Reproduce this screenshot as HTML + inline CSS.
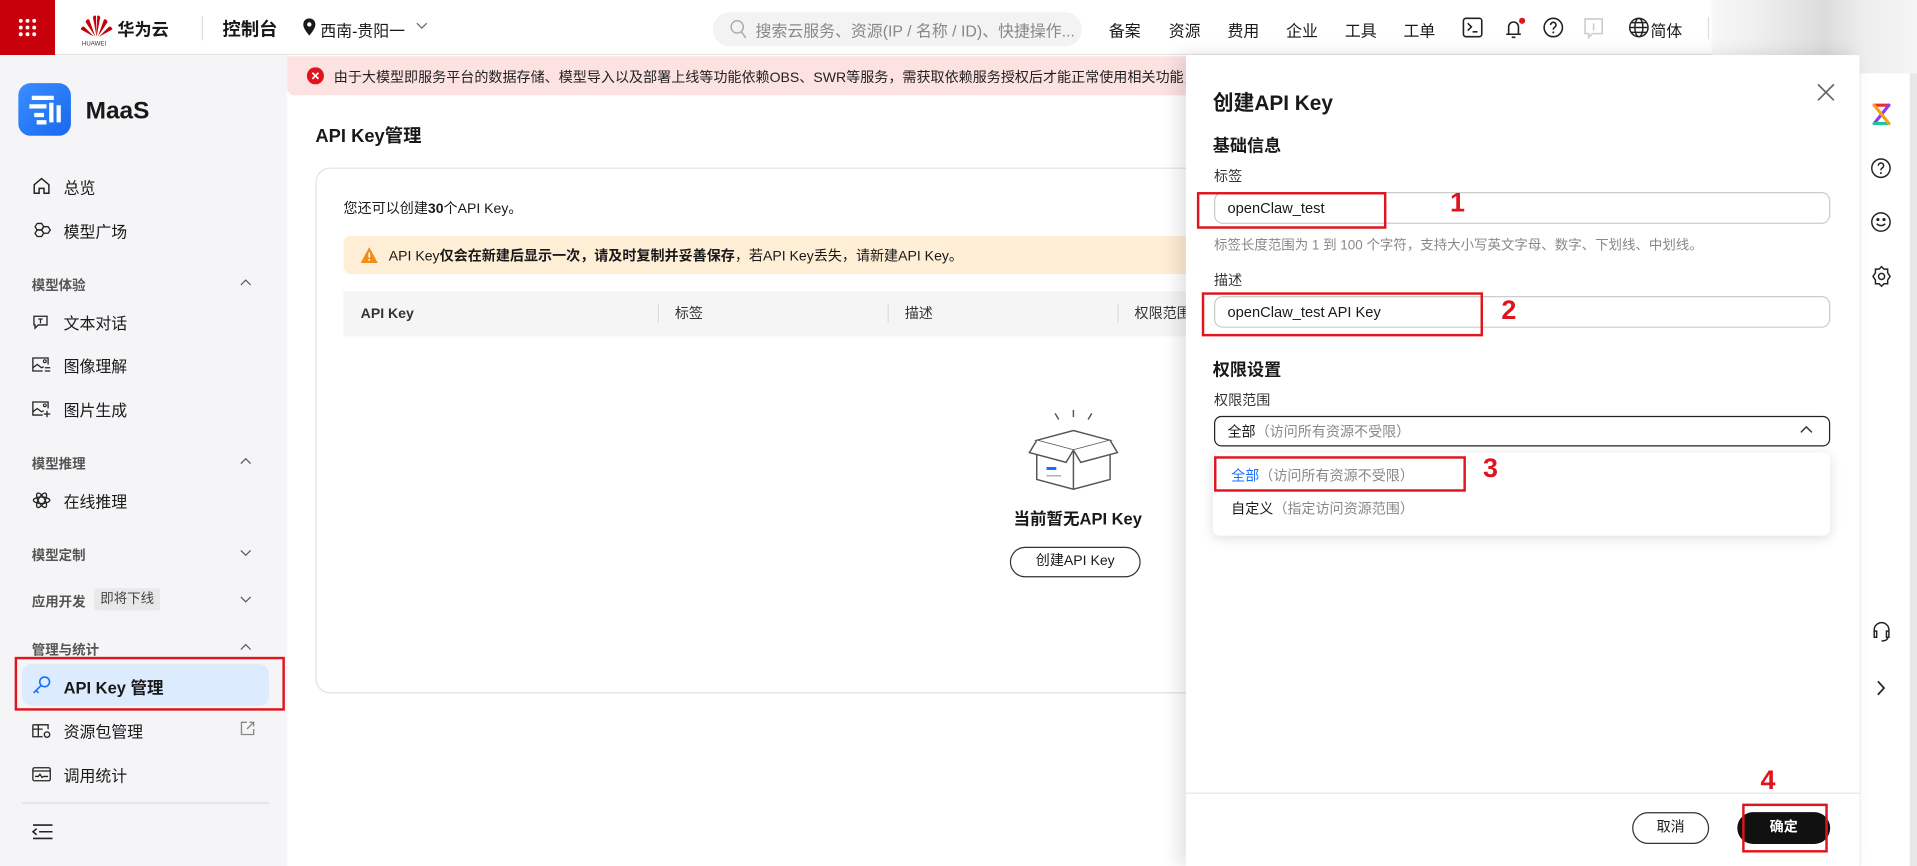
<!DOCTYPE html>
<html><head><meta charset="utf-8">
<style>
*{box-sizing:border-box;margin:0;padding:0}
html,body{width:1917px;height:866px;overflow:hidden;background:#fff}
body{font-family:"Liberation Sans","Noto Sans CJK SC",sans-serif;color:#191919}
#s{position:absolute;left:0;top:0;width:1568px;height:708px;transform:scale(1.22258,1.22316);transform-origin:0 0;overflow:hidden;background:#fff}
.a{position:absolute;white-space:nowrap}
.hdr{position:absolute;left:0;top:0;width:1568px;height:45px;background:#fff;border-bottom:1px solid #e5e5e5}
.nav{font-size:13px;top:15px;color:#191919}
.side{position:absolute;left:0;top:45px;width:235px;height:663px;background:#f5f5f7}
.mi{font-size:13px;left:52px;color:#191919}
.ml{font-size:11px;left:26px;color:#555;font-weight:bold}
.ic{position:absolute;left:26px;width:16px;height:16px}
.chev{position:absolute;left:196px;width:10px;height:10px}
.rb{position:absolute;border:2px solid #e0141e}
.rn{position:absolute;color:#e0141e;font-weight:bold;font-size:22px}
.th{top:250px;font-size:11.5px;color:#333;line-height:14px}
</style></head><body><div id="s">

<div class="hdr"></div>
<div class="a" style="left:0;top:0;width:45px;height:45px;background:#c7000b"></div>
<svg class="a" style="left:14px;top:14px" width="17" height="17" viewBox="0 0 17 17" fill="#fff"><circle cx="3" cy="3" r="1.6"/><circle cx="8.5" cy="3" r="1.6"/><circle cx="14" cy="3" r="1.6"/><circle cx="3" cy="8.5" r="1.6"/><circle cx="8.5" cy="8.5" r="1.6"/><circle cx="14" cy="8.5" r="1.6"/><circle cx="3" cy="14" r="1.6"/><circle cx="8.5" cy="14" r="1.6"/><circle cx="14" cy="14" r="1.6"/></svg>
<svg class="a" style="left:66px;top:12px" width="26" height="18" viewBox="0 0 26 18" fill="#c7000b"><path d="M13 18 L10 2 Q11 0 12.5 1Z"/><path d="M13 18 L16 2 Q15 0 13.5 1Z"/><path d="M12 18 L4 6 Q5 3 7 4Z"/><path d="M14 18 L22 6 Q21 3 19 4Z"/><path d="M11 18 L0 12 Q1 9 3 10Z"/><path d="M15 18 L26 12 Q25 9 23 10Z"/></svg>
<div class="a" style="left:67px;top:33px;font-size:5px;color:#333">HUAWEI</div>
<div class="a" style="left:96px;top:14px;font-size:14px;font-weight:bold">华为云</div>
<div class="a" style="left:165px;top:13px;width:1px;height:20px;background:#ddd"></div>
<div class="a" style="left:182px;top:13px;font-size:15px;font-weight:bold">控制台</div>
<svg class="a" style="left:248px;top:15px" width="10" height="14" viewBox="0 0 10 14"><path d="M5 0C2.2 0 0 2.2 0 5c0 3.5 5 9 5 9s5-5.5 5-9C10 2.2 7.8 0 5 0z" fill="#191919"/><circle cx="5" cy="5" r="1.8" fill="#fff"/></svg>
<div class="a" style="left:262px;top:15px;font-size:13px">西南-贵阳一</div>
<svg class="a" style="left:340px;top:18px" width="10" height="7" viewBox="0 0 10 7"><path d="M1 1l4 4 4-4" stroke="#666" fill="none"/></svg>
<div class="a" style="left:583px;top:10px;width:302px;height:28px;border-radius:14px;background:#f3f3f3"></div>
<svg class="a" style="left:597px;top:16px" width="14" height="16" viewBox="0 0 14 16"><circle cx="6" cy="6" r="5" stroke="#aaa" fill="none" stroke-width="1.2"/><path d="M9.5 10l3.5 5" stroke="#aaa" stroke-width="1.2"/></svg>
<div class="a" style="left:618px;top:15px;font-size:13px;color:#888">搜索云服务、资源(IP / 名称 / ID)、快捷操作...</div>
<div class="a nav" style="left:907px">备案</div>
<div class="a nav" style="left:956px">资源</div>
<div class="a nav" style="left:1004px">费用</div>
<div class="a nav" style="left:1052px">企业</div>
<div class="a nav" style="left:1100px">工具</div>
<div class="a nav" style="left:1148px">工单</div>
<svg class="a" style="left:1196px;top:14px" width="17" height="17" viewBox="0 0 17 17"><rect x="1" y="1" width="15" height="15" rx="2" fill="none" stroke="#222" stroke-width="1.3"/><path d="M4.5 5l3 3-3 3M8.5 12h4" stroke="#222" fill="none" stroke-width="1.3"/></svg>
<svg class="a" style="left:1229px;top:13px" width="20" height="20" viewBox="0 0 20 20"><path d="M3 15h12M5 15V9a4 4 0 018 0v6M7.5 17.5h3" stroke="#222" fill="none" stroke-width="1.3"/><circle cx="16" cy="4" r="2.5" fill="#e0141e"/></svg>
<svg class="a" style="left:1262px;top:14px" width="17" height="17" viewBox="0 0 17 17"><circle cx="8.5" cy="8.5" r="7.5" stroke="#222" fill="none" stroke-width="1.3"/><path d="M6.3 6.5a2.2 2.2 0 114 1.2c-.9.7-1.8 1-1.8 2.5" stroke="#222" fill="none" stroke-width="1.3"/><circle cx="8.5" cy="12.5" r=".8" fill="#222"/></svg>
<svg class="a" style="left:1295px;top:14px" width="17" height="18" viewBox="0 0 17 18"><path d="M1.5 1.5h14v12h-8l-3 3v-3h-3z" stroke="#ccc" fill="none" stroke-width="1.3"/><path d="M8.5 5v6" stroke="#ccc" stroke-width="1.3"/></svg>
<svg class="a" style="left:1332px;top:14px" width="17" height="17" viewBox="0 0 17 17" fill="none" stroke="#222" stroke-width="1.2"><circle cx="8.5" cy="8.5" r="7.5"/><ellipse cx="8.5" cy="8.5" rx="3.3" ry="7.5"/><path d="M1 8.5h15M2.5 4.5h12M2.5 12.5h12"/></svg>
<div class="a nav" style="left:1350px">简体</div>
<div class="a" style="left:1397px;top:14px;width:1px;height:18px;background:#ddd"></div>
<div class="a" style="left:1400px;top:0;width:168px;height:60px;background:linear-gradient(90deg,#f8f8f8,#ebebeb 30%,#dcdcdc 55%,#eee 75%,#f5f5f5)"></div>

<div class="side"></div>
<div class="a" style="left:15px;top:68px;width:43px;height:43px;border-radius:10px;background:linear-gradient(135deg,#3b8dff,#1869ee)"></div>
<svg class="a" style="left:20px;top:74px" width="33" height="31" viewBox="0 0 33 31" fill="none" stroke="#fff" stroke-width="3.5"><path d="M6 6h18M4 13h14M8 20h8M22 10v16M28 12v14M10 26h8"/></svg>
<div class="a" style="left:70px;top:80px;font-size:20px;font-weight:bold">MaaS</div>

<svg class="ic" style="top:144px" viewBox="0 0 16 16"><path d="M2 14V7l6-5 6 5v7H10V10H6v4z" fill="none" stroke="#222" stroke-width="1.2"/></svg>
<div class="a mi" style="top:143px">总览</div>
<svg class="ic" style="top:180px" viewBox="0 0 18 16"><g fill="none" stroke="#222" stroke-width="1.2"><path d="M5 2l4 0 2 3-2 3H5L3 5z"/><path d="M11 5h4l2 3-2 3h-4l-2-3z"/><path d="M5 8h4l2 3-2 3H5l-2-3z"/></g></svg>
<div class="a mi" style="top:179px">模型广场</div>
<div class="a ml" style="top:225px">模型体验</div>
<svg class="chev" style="top:226px" viewBox="0 0 10 10"><path d="M1 7l4-4 4 4" stroke="#555" fill="none"/></svg>
<svg class="ic" style="top:255px" viewBox="0 0 18 16"><path d="M2 3h12v8H6l-3 3v-3H2z" fill="none" stroke="#222" stroke-width="1.2"/><path d="M6 5.5h4M8 5.5v4" stroke="#222" stroke-width="1.1"/></svg>
<div class="a mi" style="top:254px">文本对话</div>
<svg class="ic" style="top:290px" viewBox="0 0 18 16"><path d="M15 8V2H1v12h9M1 11l4-3 4 3 2-1M12 11h5M12 14h5" fill="none" stroke="#222" stroke-width="1.2"/><circle cx="12" cy="5" r="1.3" fill="none" stroke="#222"/></svg>
<div class="a mi" style="top:289px">图像理解</div>
<svg class="ic" style="top:326px" viewBox="0 0 18 16"><path d="M15 8V2H1v12h9M1 11l4-3 4 3 2-1M14 10v6M11 13h6" fill="none" stroke="#222" stroke-width="1.2"/><circle cx="12" cy="5" r="1.3" fill="none" stroke="#222"/></svg>
<div class="a mi" style="top:325px">图片生成</div>
<div class="a ml" style="top:371px">模型推理</div>
<svg class="chev" style="top:372px" viewBox="0 0 10 10"><path d="M1 7l4-4 4 4" stroke="#555" fill="none"/></svg>
<svg class="ic" style="top:401px" viewBox="0 0 18 16"><g fill="none" stroke="#222" stroke-width="1.2"><ellipse cx="9" cy="8" rx="7.5" ry="3"/><ellipse cx="9" cy="8" rx="7.5" ry="3" transform="rotate(60 9 8)"/><ellipse cx="9" cy="8" rx="7.5" ry="3" transform="rotate(-60 9 8)"/></g></svg>
<div class="a mi" style="top:400px">在线推理</div>
<div class="a ml" style="top:446px">模型定制</div>
<svg class="chev" style="top:447px" viewBox="0 0 10 10"><path d="M1 3l4 4 4-4" stroke="#555" fill="none"/></svg>
<div class="a ml" style="top:484px">应用开发</div>
<div class="a" style="left:77px;top:481px;height:18px;padding:0 5px;background:#e8e8e8;border-radius:2px;font-size:11px;line-height:18px;color:#444">即将下线</div>
<svg class="chev" style="top:485px" viewBox="0 0 10 10"><path d="M1 3l4 4 4-4" stroke="#555" fill="none"/></svg>
<div class="a ml" style="top:523px">管理与统计</div>
<svg class="chev" style="top:524px" viewBox="0 0 10 10"><path d="M1 7l4-4 4 4" stroke="#555" fill="none"/></svg>
<div class="a" style="left:18px;top:543px;width:202px;height:34px;background:#dcebfd;border-radius:8px"></div>
<svg class="ic" style="top:552px" viewBox="0 0 16 16"><g fill="none" stroke="#1a6eff" stroke-width="1.3"><circle cx="10.5" cy="5.5" r="4"/><path d="M7.5 8.5L1.5 14.5M3.5 12.5l2 2"/></g></svg>
<div class="a mi" style="top:551px;font-weight:bold;font-size:13.5px">API Key 管理</div>
<div class="rb" style="left:12px;top:537px;width:221px;height:44px"></div>
<svg class="ic" style="top:589px" viewBox="0 0 18 16"><g fill="none" stroke="#222" stroke-width="1.2"><path d="M1 3h14v4M1 3v11h9M1 7h9M6 3v11"/><circle cx="14" cy="12" r="2.5"/></g></svg>
<div class="a mi" style="top:588px">资源包管理</div>
<svg class="a" style="left:196px;top:589px" width="13" height="13" viewBox="0 0 13 13"><path d="M6 1.5H1.5v10h10V7M8 1.5h3.5V5M11.5 1.5L6 7" stroke="#888" fill="none" stroke-width="1.1"/></svg>
<svg class="ic" style="top:625px" viewBox="0 0 18 16"><g fill="none" stroke="#222" stroke-width="1.2"><rect x="1" y="2" width="16" height="12" rx="1.5"/><path d="M1 5h16M3 10h3l1.5-2 2 3 1.5-1h4"/></g></svg>
<div class="a mi" style="top:624px">调用统计</div>
<div class="a" style="left:18px;top:656px;width:202px;height:1px;background:#ddd"></div>
<svg class="a" style="left:26px;top:673px" width="17" height="14" viewBox="0 0 17 14"><path d="M1 1.5h16M6 7h11M1 12.5h16M4 4.5L1 7l3 2.5" stroke="#222" fill="none" stroke-width="1.3"/></svg>

<div class="a" style="left:235px;top:46px;width:760px;height:32px;background:#fde2e2;border-radius:0 0 6px 6px"></div>
<svg class="a" style="left:251px;top:55px" width="14" height="14" viewBox="0 0 14 14"><circle cx="7" cy="7" r="7" fill="#e0141e"/><path d="M4.5 4.5l5 5M9.5 4.5l-5 5" stroke="#fff" stroke-width="1.4"/></svg>
<div class="a" style="left:273px;top:55px;font-size:11.5px;color:#222">由于大模型即服务平台的数据存储、模型导入以及部署上线等功能依赖OBS、SWR等服务，需获取依赖服务授权后才能正常使用相关功能，点击</div>

<div class="a" style="left:258px;top:100px;font-size:15px;font-weight:bold">API Key管理</div>
<div class="a" style="left:258px;top:137px;width:760px;height:430px;border:1px solid #e2e2e2;border-radius:12px"></div>
<div class="a" style="left:281px;top:162px;font-size:11.5px">您还可以创建<b>30</b>个API Key。</div>
<div class="a" style="left:281px;top:193px;width:720px;height:31px;background:#feeed6;border-radius:6px"></div>
<svg class="a" style="left:295px;top:202px" width="14" height="13" viewBox="0 0 14 13"><path d="M7 0L14 13H0z" fill="#f08c19"/><path d="M7 4.5v4" stroke="#fff" stroke-width="1.4"/><circle cx="7" cy="10.5" r=".8" fill="#fff"/></svg>
<div class="a" style="left:318px;top:201px;font-size:11.5px">API Key<b>仅会在新建后显示一次，请及时复制并妥善保存</b>，若API Key丢失，请新建API Key。</div>
<div class="a" style="left:281px;top:238px;width:720px;height:37px;background:#f5f5f5"></div>
<div class="a th" style="left:295px;font-weight:bold">API Key</div>
<div class="a" style="left:538px;top:248px;width:1px;height:16px;background:#ddd"></div>
<div class="a th" style="left:552px">标签</div>
<div class="a" style="left:726px;top:248px;width:1px;height:16px;background:#ddd"></div>
<div class="a th" style="left:740px">描述</div>
<div class="a" style="left:914px;top:248px;width:1px;height:16px;background:#ddd"></div>
<div class="a th" style="left:928px">权限范围</div>

<svg class="a" style="left:838px;top:335px" width="80" height="70" viewBox="0 0 80 70" fill="none" stroke="#555" stroke-width="1.2"><path d="M28 8l-3-5M40 6V0M52 8l3-5"/><path d="M10 25l30-8 30 8-30 8z" fill="#fff"/><path d="M10 25v32l30 8 30-8V25"/><path d="M40 33v32"/><path d="M10 25l-6 10 30 8 6-10M70 25l6 10-30 8-6-10" fill="#fff"/><path d="M18 48h8" stroke="#1a6eff" stroke-width="2.5"/><path d="M18 54h12" stroke="#aaa"/></svg>
<div class="a" style="left:829px;top:413px;font-size:13.5px;font-weight:bold">当前暂无API Key</div>
<div class="a" style="left:826px;top:447px;width:107px;height:25px;border:1px solid #333;border-radius:13px;font-size:11.5px;line-height:23px;text-align:center">创建API Key</div>

<div class="a" style="left:970px;top:45px;width:551px;height:663px;background:#fff;box-shadow:-6px 0 14px rgba(0,0,0,.12)"></div>
<div class="a" style="left:992px;top:70px;font-size:17px;font-weight:bold">创建API Key</div>
<svg class="a" style="left:1486px;top:68px" width="15" height="15" viewBox="0 0 15 15"><path d="M1 1l13 13M14 1L1 14" stroke="#666" stroke-width="1.4"/></svg>
<div class="a" style="left:992px;top:109px;font-size:14px;font-weight:bold">基础信息</div>
<div class="a" style="left:993px;top:136px;font-size:11.5px;color:#333">标签</div>
<div class="a" style="left:993px;top:157px;width:504px;height:26px;border:1px solid #ccc;border-radius:7px"></div>
<div class="a" style="left:1004px;top:163px;font-size:12px">openClaw_test</div>
<div class="rb" style="left:979px;top:157px;width:155px;height:30px"></div>
<div class="rn" style="left:1186px;top:153px">1</div>
<div class="a" style="left:993px;top:192px;font-size:11px;color:#888">标签长度范围为 1 到 100 个字符，支持大小写英文字母、数字、下划线、中划线。</div>
<div class="a" style="left:993px;top:221px;font-size:11.5px;color:#333">描述</div>
<div class="a" style="left:993px;top:242px;width:504px;height:26px;border:1px solid #ccc;border-radius:7px"></div>
<div class="a" style="left:1004px;top:248px;font-size:12px">openClaw_test API Key</div>
<div class="rb" style="left:983px;top:239px;width:230px;height:36px"></div>
<div class="rn" style="left:1228px;top:241px">2</div>
<div class="a" style="left:992px;top:292px;font-size:14px;font-weight:bold">权限设置</div>
<div class="a" style="left:993px;top:319px;font-size:11.5px;color:#333">权限范围</div>
<div class="a" style="left:993px;top:340px;width:504px;height:25px;border:1px solid #222;border-radius:6px"></div>
<div class="a" style="left:1004px;top:345px;font-size:11.5px">全部<span style="color:#888">（访问所有资源不受限）</span></div>
<svg class="a" style="left:1472px;top:347px" width="11" height="8" viewBox="0 0 11 8"><path d="M1 6.5l4.5-4.5 4.5 4.5" stroke="#333" fill="none" stroke-width="1.2"/></svg>
<div class="a" style="left:992px;top:370px;width:505px;height:68px;background:#fff;border-radius:6px;box-shadow:0 2px 10px rgba(0,0,0,.13)"></div>
<div class="a" style="left:1007px;top:381px;font-size:11.5px;color:#1a6eff">全部<span style="color:#888">（访问所有资源不受限）</span></div>
<div class="rb" style="left:993px;top:373px;width:206px;height:29px"></div>
<div class="rn" style="left:1213px;top:370px">3</div>
<div class="a" style="left:1007px;top:408px;font-size:11.5px">自定义<span style="color:#888">（指定访问资源范围）</span></div>
<div class="a" style="left:970px;top:648px;width:551px;height:1px;background:#e5e5e5"></div>
<div class="rn" style="left:1440px;top:625px">4</div>
<div class="a" style="left:1335px;top:664px;width:63px;height:26px;border:1px solid #333;border-radius:13px;font-size:11.5px;line-height:24px;text-align:center">取消</div>
<div class="a" style="left:1421px;top:664px;width:76px;height:26px;background:#111;border-radius:13px;font-size:11.5px;line-height:26px;text-align:center;color:#fff;font-weight:bold">确定</div>
<div class="rb" style="left:1425px;top:657px;width:70px;height:40px"></div>

<div class="a" style="left:1521px;top:60px;width:1px;height:648px;background:#eee"></div>
<div class="a" style="left:1562px;top:60px;width:6px;height:648px;background:#e8e8e8"></div>
<svg class="a" style="left:1531px;top:84px" width="16" height="19" viewBox="0 0 16 19" fill="none" stroke-width="2.6" stroke-linecap="round"><path d="M2 2h12" stroke="#f0283c"/><path d="M14 2L2 17" stroke="#8a3cf0"/><path d="M2 17h12" stroke="#19c8a0"/><path d="M2 2l12 15" stroke="#f5a019"/></svg>
<svg class="a" style="left:1530px;top:129px" width="17" height="17" viewBox="0 0 17 17"><circle cx="8.5" cy="8.5" r="7.5" stroke="#222" fill="none" stroke-width="1.2"/><path d="M6.3 6.5a2.2 2.2 0 114 1.2c-.9.7-1.8 1-1.8 2.5" stroke="#222" fill="none" stroke-width="1.2"/><circle cx="8.5" cy="12.5" r=".8" fill="#222"/></svg>
<svg class="a" style="left:1530px;top:173px" width="17" height="17" viewBox="0 0 17 17" fill="none" stroke="#222" stroke-width="1.2"><circle cx="8.5" cy="8.5" r="7.5"/><path d="M5 10q3.5 3 7 0"/><circle cx="6" cy="6.5" r=".7" fill="#222"/><circle cx="11" cy="6.5" r=".7" fill="#222"/></svg>
<svg class="a" style="left:1530px;top:217px" width="18" height="18" viewBox="0 0 18 18" fill="none" stroke="#222" stroke-width="1.2"><path d="M9 1l2 2h3v3l2 3-2 3v3h-3l-2 2-2-2H4v-3L2 9l2-3V3h3z"/><circle cx="9" cy="9" r="2.5"/></svg>
<svg class="a" style="left:1530px;top:507px" width="18" height="18" viewBox="0 0 18 18" fill="none" stroke="#222" stroke-width="1.2"><path d="M3 10V8a6 6 0 0112 0v2M3 9h2v5H3zM13 9h2v5h-2zM14 14q0 3-5 3"/></svg>
<svg class="a" style="left:1534px;top:556px" width="9" height="13" viewBox="0 0 9 13"><path d="M2 1l5 5.5L2 12" stroke="#222" fill="none" stroke-width="1.4"/></svg>
</div></body></html>
